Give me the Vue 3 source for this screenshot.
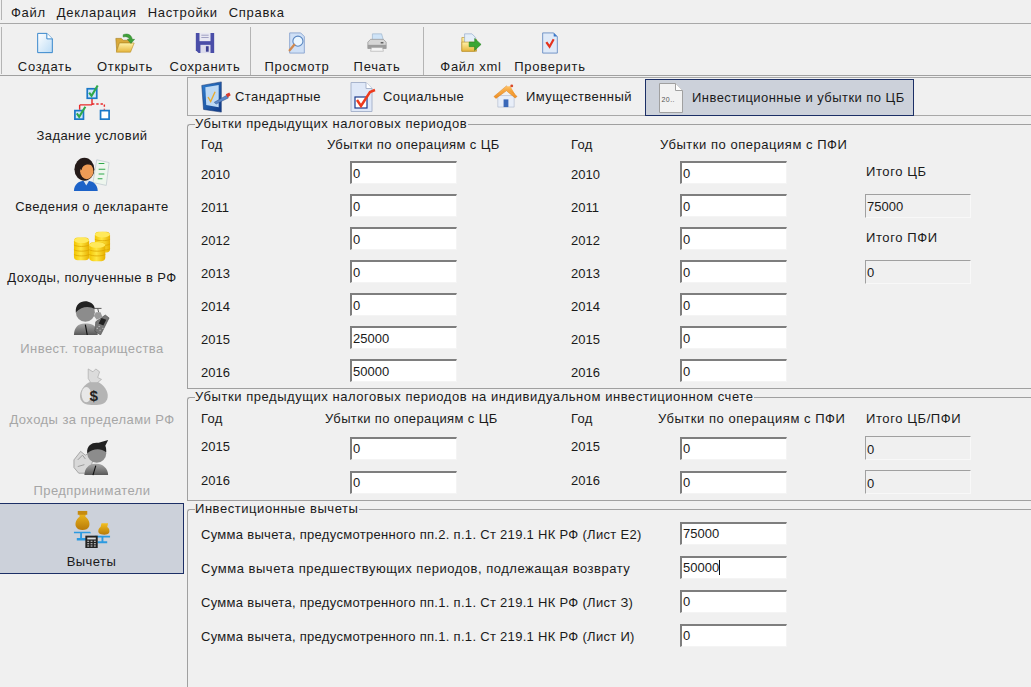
<script setup>
const menu = ['Файл', 'Декларация', 'Настройки', 'Справка']
const tools1 = [
  { t: 'Создать', i: 'new', w: 80 },
  { t: 'Открыть', i: 'open', w: 80 },
  { t: 'Сохранить', i: 'save', w: 80 }
]
const tools2 = [
  { t: 'Просмотр', i: 'preview', w: 92 },
  { t: 'Печать', i: 'print', w: 68 }
]
const tools3 = [
  { t: 'Файл xml', i: 'xml', w: 84 },
  { t: 'Проверить', i: 'check', w: 74 }
]
const nav = [
  { t: 'Задание условий', i: 'tree' },
  { t: 'Сведения о декларанте', i: 'person' },
  { t: 'Доходы, полученные в РФ', i: 'coins' },
  { t: 'Инвест. товарищества', i: 'invest', off: true },
  { t: 'Доходы за пределами РФ', i: 'bag', off: true },
  { t: 'Предприниматели', i: 'biz', off: true },
  { t: 'Вычеты', i: 'scale', on: true }
]
const rows1 = [
  ['2010', '0', '0'], ['2011', '0', '0'], ['2012', '0', '0'], ['2013', '0', '0'],
  ['2014', '0', '0'], ['2015', '25000', '0'], ['2016', '50000', '0']
]
const side = { 0: ['Итого ЦБ', false], 1: ['75000', true], 2: ['Итого ПФИ', false], 3: ['0', true] }
const rows2 = [['2015', '0', '0', '0'], ['2016', '0', '0', '0']]
const rows3 = [
  ['Сумма вычета, предусмотренного пп.2. п.1. Ст 219.1 НК РФ (Лист Е2)', '75000', false],
  ['Сумма вычета предшествующих периодов, подлежащая возврату', '50000', true],
  ['Сумма вычета, предусмотренного пп.1. п.1. Ст 219.1 НК РФ (Лист З)', '0', false],
  ['Сумма вычета, предусмотренного пп.1. п.1. Ст 219.1 НК РФ (Лист И)', '0', false]
]
</script>

<template>
  <div class="app">
    <svg class="defs" width="0" height="0" aria-hidden="true">
      <defs>
        <linearGradient id="gPage" x1="0" y1="0" x2="1" y2="1"><stop offset="0" stop-color="#ffffff"/><stop offset="1" stop-color="#bcdcf6"/></linearGradient>
        <linearGradient id="gFolder" x1="0" y1="0" x2="0" y2="1"><stop offset="0" stop-color="#fff2a8"/><stop offset="1" stop-color="#e6b53c"/></linearGradient>
        <linearGradient id="gGold" x1="0" y1="0" x2="1" y2="0"><stop offset="0" stop-color="#f2c400"/><stop offset=".45" stop-color="#ffe640"/><stop offset="1" stop-color="#e8b000"/></linearGradient>
        <linearGradient id="gGrey" x1="0" y1="0" x2="0" y2="1"><stop offset="0" stop-color="#a8a8a8"/><stop offset="1" stop-color="#585858"/></linearGradient>
        <linearGradient id="gBlue" x1="0" y1="0" x2="1" y2="1"><stop offset="0" stop-color="#2f7fd0"/><stop offset="1" stop-color="#123a86"/></linearGradient>
        <linearGradient id="gRoof" x1="0" y1="0" x2="0" y2="1"><stop offset="0" stop-color="#ffc468"/><stop offset="1" stop-color="#ee8c1e"/></linearGradient>
        <linearGradient id="gSack" x1="0" y1="0" x2="0" y2="1"><stop offset="0" stop-color="#f4c020"/><stop offset="1" stop-color="#b87a08"/></linearGradient>
      </defs>
    </svg>

    <nav class="menubar">
      <span v-for="m in menu" :key="m">{{ m }}</span>
    </nav>

    <div class="toolbar">
      <div class="tgroup g1">
        <button v-for="b in tools1" :key="b.t" class="tool" :style="{ width: b.w + 'px' }">
          <svg class="ticon" viewBox="0 0 24 24">
            <template v-if="b.i === 'new'">
              <path d="M4 1.500h10l6 6v15H4z" fill="url(#gPage)" stroke="#2a7fc8"/>
              <path d="M14 1.500v6h6" fill="#fff" stroke="#2a7fc8"/>
            </template>
            <template v-else-if="b.i === 'open'">
              <path d="M2 7h6l2 2h9v3H6L3 21z" fill="#d9a93a" stroke="#a8801e" stroke-width=".7"/>
              <path d="M6 12h16l-4 10H2.500z" fill="url(#gFolder)" stroke="#b8902c" stroke-width=".7"/>
              <path d="M10 3c5-2 9 0 10 5h2.500l-4 4.500-4-4.500h2.500c-1-2.500-3.500-3.500-7-2.500z" fill="#3fa03a" stroke="#2a7a28" stroke-width=".5"/>
            </template>
            <template v-else-if="b.i === 'save'">
              <path d="M2 1h20v22H5l-3-3z" fill="#4a4ea8"/>
              <rect x="6" y="1" width="12" height="9" fill="#e8e8f2"/>
              <path d="M8 3.500h8M8 6h8" stroke="#9a9ac0"/>
              <rect x="7" y="14" width="11" height="9" fill="#dcdcec"/>
              <rect x="13" y="15.500" width="3" height="6" fill="#3c3f92"/>
            </template>
          </svg>
          <span>{{ b.t }}</span>
        </button>
      </div>
      <div class="tgroup g2">
        <button v-for="b in tools2" :key="b.t" class="tool" :style="{ width: b.w + 'px' }">
          <svg class="ticon" viewBox="0 0 24 24">
            <template v-if="b.i === 'preview'">
              <path d="M4 1h12l4 4v18H4z" fill="#cfe0f6" stroke="#8aa4d0"/>
              <circle cx="13" cy="10" r="5.500" fill="#eaf6ff" stroke="#5a86c0" stroke-width="1.200"/>
              <path d="M9 14l-5 6" stroke="#d08a50" stroke-width="2.500" stroke-linecap="round"/>
            </template>
            <template v-else>
              <path d="M7 9V2h10l2 7z" fill="#cfe4f8" stroke="#9ab0c8" stroke-width=".7"/>
              <path d="M2 11l3-3h14l3 3v7H2z" fill="#d6d6d6" stroke="#8c8c8c" stroke-width=".7"/>
              <path d="M2 14h20v4H2z" fill="#9c9c9c"/>
              <path d="M6 17h12l1 4H5z" fill="#f6f6f6" stroke="#a0a0a0" stroke-width=".6"/>
              <rect x="16" y="11" width="3" height="1.500" fill="#5a5a5a"/>
            </template>
          </svg>
          <span>{{ b.t }}</span>
        </button>
      </div>
      <div class="tgroup g3">
        <button v-for="b in tools3" :key="b.t" class="tool" :style="{ width: b.w + 'px' }">
          <svg class="ticon" viewBox="0 0 24 24">
            <template v-if="b.i === 'xml'">
              <path d="M2 6h7l2 2h7v13H2z" fill="url(#gFolder)" stroke="#b8902c" stroke-width=".7"/>
              <path d="M5 2h8l4 4v8H5z" fill="#e4eef8" stroke="#8ea8cc" stroke-width=".7"/>
              <path d="M2 11h14v10H2z" fill="url(#gFolder)" stroke="#b8902c" stroke-width=".7"/>
              <path d="M10 11h6V7l7 6.500-7 6.500v-4h-6z" fill="#39a635" stroke="#25801f" stroke-width=".6"/>
            </template>
            <template v-else>
              <path d="M4 1h12l4 4v18H4z" fill="#dfeaf8" stroke="#6a8ec4"/>
              <path d="M16 1v4h4" fill="#3a78c8"/>
              <path d="M8 11l3.500 5L16 8" fill="none" stroke="#e5321c" stroke-width="2.400"/>
            </template>
          </svg>
          <span>{{ b.t }}</span>
        </button>
      </div>
    </div>

    <div class="body">
      <aside class="sidebar">
        <button v-for="n in nav" :key="n.t" class="navitem" :class="{ off: n.off, on: n.on }">
          <svg class="nicon" viewBox="0 0 40 40">
            <template v-if="n.i === 'tree'">
              <path d="M20 14v8M7 22h13M7 22v5" fill="none" stroke="#e82a2a" stroke-width="1.500"/>
              <path d="M20 21h13v6" fill="none" stroke="#e82a2a" stroke-width="1.500" stroke-dasharray="2.500 2"/>
              <rect x="15" y="5" width="10" height="10" fill="#cfe6fa" stroke="#1a78c8" stroke-width="1.800"/>
              <path d="M17 9l2.500 3.500L26 1.500" fill="none" stroke="#2fa84a" stroke-width="2.200"/>
              <rect x="2" y="28" width="9" height="9" fill="#cfe6fa" stroke="#1a78c8" stroke-width="1.800"/>
              <path d="M4 31l2.500 3.500L13 24" fill="none" stroke="#2fa84a" stroke-width="2.200"/>
              <rect x="29" y="28" width="9" height="9" fill="#fff" stroke="#1a78c8" stroke-width="1.800"/>
            </template>
            <template v-else-if="n.i === 'person'">
              <path d="M25 5l13 3-3 24-14-3z" fill="#eef6ee" stroke="#b8c4cc" stroke-width=".7"/>
              <path d="M27 9h6M27 15h7M27 20h6M26 25h5" stroke="#2fa84a" stroke-width="1.200"/>
              <path d="M1 38c0-7 5-11 11-11h3c6 0 11 4 11 11z" fill="#1c62c8"/>
              <path d="M11 27l3 5 3-5z" fill="#dfe6ee"/>
              <ellipse cx="12" cy="15" rx="10.500" ry="12" fill="#241a18"/>
              <ellipse cx="14.500" cy="17" rx="7" ry="8.500" fill="#ee9c56"/>
              <path d="M5 12c4-6 12-6 15-1-4-2-10-1-11 5z" fill="#241a18"/>
            </template>
            <template v-else-if="n.i === 'coins'">
              <g>
                <rect x="23" y="6" width="16" height="22" rx="4" fill="url(#gGold)"/>
                <ellipse cx="31" cy="9" rx="8" ry="3" fill="#ffe95a"/>
                <path d="M23 14c3 2 13 2 16 0M23 19c3 2 13 2 16 0M23 24c3 2 13 2 16 0" stroke="#dba400" stroke-width=".8" fill="none"/>
                <rect x="1" y="12" width="16" height="24" rx="4" fill="url(#gGold)"/>
                <ellipse cx="9" cy="15" rx="8" ry="3" fill="#ffe95a"/>
                <path d="M1 20c3 2 13 2 16 0M1 25c3 2 13 2 16 0M1 30c3 2 13 2 16 0" stroke="#dba400" stroke-width=".8" fill="none"/>
                <rect x="17" y="17" width="17" height="20" rx="4" fill="url(#gGold)"/>
                <ellipse cx="25.500" cy="20" rx="8.500" ry="3" fill="#ffe95a"/>
                <path d="M17 25c3 2 14 2 17 0M17 30c3 2 14 2 17 0" stroke="#dba400" stroke-width=".8" fill="none"/>
              </g>
            </template>
            <template v-else-if="n.i === 'invest'">
              <g transform="translate(0 2)">
                <path d="M1 38c0-8 5-12 11-12h3c6 0 11 4 11 12z" fill="url(#gGrey)"/>
                <path d="M13 27l2 11" stroke="#111" stroke-width="1.200"/>
                <circle cx="13" cy="14" r="10" fill="#8c8c8c"/>
                <path d="M3 14C2 5 10 1 16 3c4 1 7 4 7 8-6-4-14-3-20 3z" fill="#222"/>
                <path d="M24 24l10-7 4 3-9 18-6-4z" fill="#777" stroke="#444" stroke-width=".6"/>
                <path d="M30 20l5 2-3 6-5-2z" fill="#222"/>
                <path d="M25 31h1M28 33h1M31 31h1M27 29h1" stroke="#ddd"/>
                <path d="M24 14h5l2 5-6 3-3-4z" fill="#9a9a9a"/>
                <path d="M26 10l1 4M23 10h7" stroke="#555"/>
              </g>
            </template>
            <template v-else-if="n.i === 'bag'">
              <g transform="translate(2 0)">
                <path d="M14 1l5 3 3-3 4 3-2 6 4 2-5 4h-6l-3-5z" fill="#dcdcdc" stroke="#a8a8a8" stroke-width=".7"/>
                <path d="M15 15h10c8 5 11 12 9 18-2 5-7 6-14 6s-12-1-14-6c-2-6 1-13 9-18z" fill="#b4b4b4"/>
                <ellipse cx="12" cy="28" rx="5" ry="8" fill="#e8e8e8"/>
                <text x="20" y="35" text-anchor="middle" class="dollar">$</text>
              </g>
            </template>
            <template v-else-if="n.i === 'biz'">
              <path d="M1 22l7-9 5 4 5-3 3 8-4 14H6l-5-6z" fill="#d8d8d8" stroke="#888" stroke-width=".7"/>
              <path d="M5 22l5-5 3 4M5 29l7-2" stroke="#999" fill="none"/>
              <path d="M12 38c0-7 5-12 11-12h2c6 0 12 5 12 12z" fill="url(#gGrey)"/>
              <path d="M24 28l-3 10" stroke="#111" stroke-width="1.200"/>
              <circle cx="25" cy="15" r="10" fill="#8c8c8c"/>
              <path d="M15 15c-1-9 6-12 12-11l10-3-3 6c1 2 1 4 1 7-6-5-14-4-20 1z" fill="#222"/>
            </template>
            <template v-else>
              <path d="M6 1h8l-1 6c4 3 5 7 4 10-1 3-4 4-7 4s-6-1-7-4c-1-3 0-7 4-10z" fill="url(#gSack)"/>
              <path d="M5 1h10v4H5z" fill="#c58a10"/>
              <path d="M30 14h7l-1 4c2 1 3 4 2 6-1 1.500-3 2-5 2s-5-.500-6-2c-1-2 0-5 2-6z" fill="url(#gSack)"/>
              <path d="M1 23h17l1 1.500H9.500v5H14V32H4v-2.500h3.500v-5H1z" fill="#2c9ae0"/>
              <path d="M23 27h16v2h-7v4h4v2H26v-2h4v-4h-7z" fill="#2c9ae0"/>
              <rect x="13" y="27" width="13" height="13" fill="#222"/>
              <rect x="15" y="29" width="9" height="2" fill="#dcdcdc"/>
              <path d="M15 33h2M18.500 33h2M22 33h2M15 35.500h2M18.500 35.500h2M22 35.500h2M15 38h2M18.500 38h2M22 38h2" stroke="#dcdcdc" stroke-width="1.100"/>
            </template>
          </svg>
          <span>{{ n.t }}</span>
        </button>
      </aside>

      <main class="content">
        <div class="tabs">
          <button class="tab std">
            <svg class="ti-std" viewBox="0 0 36 36">
              <path d="M2 5L24 1v34L4 32z" fill="url(#gBlue)" stroke="#0f2f6e" stroke-width=".6"/>
              <path d="M6 7l15-2.500v25L7 27z" fill="#bcd8f4"/>
              <path d="M9 18l3 5 5-11" fill="none" stroke="#eaa92a" stroke-width="1.500"/>
              <path d="M16 24l14-8 2 3-14 7z" fill="#5a86c8" stroke="#28487c" stroke-width=".5"/>
              <path d="M29 15l4-2 1.500 3-3.500 2.500z" fill="#d83a2c"/>
            </svg>
            <span>Стандартные</span>
          </button>
          <button class="tab soc">
            <svg class="ti-soc" viewBox="0 0 26 30">
              <path d="M1 .500h15l6 6v23H1z" fill="#dfe8f8" stroke="#a8b4cc"/>
              <path d="M16 .500v6h6" fill="#fff" stroke="#a8b4cc"/>
              <rect x="5" y="15" width="12" height="11" fill="#fff" stroke="#1c3a8c" stroke-width="1.200"/>
              <path d="M7 18l4 6L20 10l5-2" fill="none" stroke="#ee3a1c" stroke-width="2.500"/>
            </svg>
            <span>Социальные</span>
          </button>
          <button class="tab imu">
            <svg class="ti-imu" viewBox="0 0 26 26">
              <path d="M5 12h17v12H5z" fill="#e8eef8" stroke="#9aa8c0" stroke-width=".5"/>
              <path d="M11 16h5v8h-5z" fill="#3a68b8"/>
              <path d="M1 13L14 2l11 11-2 1.500L14 7 3 15z" fill="url(#gRoof)" stroke="#d87a18" stroke-width=".5"/>
              <path d="M13 3l5-1 5 9-9-5-6 4z" fill="url(#gRoof)"/>
              <circle cx="19.500" cy="2" r="1.500" fill="#d84a2a"/>
            </svg>
            <span>Имущественный</span>
          </button>
          <button class="tab inv">
            <svg class="ti-inv" viewBox="0 0 24 30">
              <path d="M.5.500h16l7 7v22H.5z" fill="#f2f2f2" stroke="#a0a0a0"/>
              <path d="M16.500.500v7h7" fill="#fff" stroke="#a0a0a0"/>
              <text x="2.500" y="19" class="docnum">20..</text>
            </svg>
            <span>Инвестиционные и убытки по ЦБ</span>
          </button>
        </div>

        <fieldset class="group g-a">
          <legend>Убытки предыдущих налоговых периодов</legend>
          <div class="grid">
            <span class="head c1">Год</span>
            <span class="head c2">Убытки по операциям с ЦБ</span>
            <span class="head c4">Год</span>
            <span class="head c5 wide">Убытки по операциям с ПФИ</span>
            <template v-for="(r, i) in rows1" :key="r[0]">
              <span class="year c1">{{ r[0] }}</span>
              <input class="inp c3" :value="r[1]" readonly />
              <span class="year c4">{{ r[0] }}</span>
              <input class="inp c6" :value="r[2]" readonly />
              <input v-if="side[i] && side[i][1]" class="inp ro c7" :value="side[i][0]" readonly />
              <span v-else-if="side[i]" class="total c7">{{ side[i][0] }}</span>
            </template>
          </div>
        </fieldset>

        <fieldset class="group g-b">
          <legend>Убытки предыдущих налоговых периодов на индивидуальном инвестиционном счете</legend>
          <div class="grid grid-b">
            <span class="head c1">Год</span>
            <span class="head c2 nudge">Убытки по операциям с ЦБ</span>
            <span class="head c4">Год</span>
            <span class="head c5 nudge wide">Убытки по операциям с ПФИ</span>
            <span class="head total c7">Итого ЦБ/ПФИ</span>
            <template v-for="r in rows2" :key="r[0]">
              <span class="year c1">{{ r[0] }}</span>
              <input class="inp c3" :value="r[1]" readonly />
              <span class="year c4">{{ r[0] }}</span>
              <input class="inp c6" :value="r[2]" readonly />
              <input class="inp ro c7" :value="r[3]" readonly />
            </template>
          </div>
        </fieldset>

        <fieldset class="group g-c">
          <legend>Инвестиционные вычеты</legend>
          <div class="deductions">
            <template v-for="r in rows3" :key="r[0]">
              <span class="dlabel" :class="{ wide: r[2] }">{{ r[0] }}</span>
              <div class="inp fake">{{ r[1] }}<i v-if="r[2]" class="caret"></i></div>
            </template>
          </div>
        </fieldset>
      </main>
    </div>
  </div>
</template>

<style>
html, body { margin: 0; padding: 0; background: #f0f0f0; overflow: hidden; }
</style>

<style scoped>
.app {
  width: 1031px;
  height: 687px;
  overflow: hidden;
  background: #f0f0f0;
  color: #1a1a1a;
  font: 13px/14px "Liberation Sans", sans-serif;
  letter-spacing: .45px;
  display: flex;
  flex-direction: column;
}
.defs { position: absolute; }
button { font: inherit; letter-spacing: inherit; color: inherit; background: none; border: 0; padding: 0; }

.menubar {
  height: 24px;
  box-sizing: border-box;
  border-bottom: 1px solid #a8a8a8;
  display: flex;
  gap: 11px;
  padding: 6px 0 0 11px;
  letter-spacing: .7px;
  position: relative;
}
.menubar::before {
  content: "";
  position: absolute;
  left: 1px;
  top: 0;
  bottom: 3px;
  width: 1px;
  background: #b4b4b4;
}
.toolbar {
  height: 52px;
  box-sizing: border-box;
  border-bottom: 1px solid #a0a0a0;
  display: flex;
  padding: 3px 0 0 5px;
  position: relative;
  letter-spacing: .7px;
}
.toolbar::before {
  content: "";
  position: absolute;
  left: 1px;
  top: 3px;
  bottom: 1px;
  width: 1px;
  background: #b4b4b4;
}
.tgroup { display: flex; border-right: 1px solid #b4b4b4; }
.g1 { width: 245px; }
.g2 { width: 172px; }
.g3 { border-right: 0; padding-left: 5px; }
.tool {
  display: flex;
  flex-direction: column;
  align-items: center;
  height: 48px;
  padding-top: 5px;
  white-space: nowrap;
}
.tool span { margin-top: 6px; }
.ticon { width: 22px; height: 22px; flex: none; }

.body { flex: 1; display: flex; min-height: 0; }
.sidebar {
  width: 187px;
  flex: none;
  padding-top: 1px;
  display: flex;
  flex-direction: column;
}
.navitem {
  height: 71px;
  box-sizing: border-box;
  width: 184px;
  flex: none;
  display: flex;
  flex-direction: column;
  align-items: center;
  padding-top: 7px;
  white-space: nowrap;
}
.navitem span { margin-top: 7px; }
.nicon { width: 38px; height: 38px; flex: none; }
.navitem.off { color: #a6a6a6; }
.navitem.on {
  background: #ccd1da;
  border: 1px solid #1c2f66;
  border-left: 0;
  padding-top: 6px;
}
.content { flex: 1; min-width: 0; }

.tabs {
  height: 39px;
  box-sizing: border-box;
  margin-top: 1px;
  border: 1px solid #a8a8a8;
  border-right: 0;
  display: flex;
  padding-left: 12px;
}
.tab { display: flex; align-items: center; white-space: nowrap; height: 37px; flex: none; }
.std { width: 150px; }
.soc { width: 143px; }
.imu { width: 152px; }
.ti-std { width: 32px; height: 32px; margin-right: 3px; flex: none; }
.ti-soc { width: 26px; height: 30px; margin-right: 7px; flex: none; }
.ti-imu { width: 25px; height: 25px; margin-right: 8px; flex: none; }
.ti-inv { width: 24px; height: 30px; margin-right: 9px; flex: none; }
.inv {
  width: 269px;
  margin-top: 1px;
  box-sizing: border-box;
  background: #ccd1da;
  border: 1px solid #1c2f66;
  padding-left: 13px;
}
.docnum { font: 7px "Liberation Sans", sans-serif; fill: #555; }
.dollar { font: bold 16px "Liberation Sans", sans-serif; fill: #222; }

.group {
  margin: 0;
  min-width: 0;
  padding: 0;
  box-sizing: border-box;
  border: 1px solid #a0a0a0;
  border-right: 0;
  border-top-left-radius: 3px;
}
.group legend {
  padding: 0 1px 0 0;
  margin-left: 7px;
  line-height: 14px;
  white-space: nowrap;
  letter-spacing: .55px;
}
.g-a { margin-top: 1px; height: 272px; }
.g-b { margin-top: 1px; height: 111px; }
.g-c { margin-top: 1px; height: 190px; border-bottom: 0; }

.grid {
  display: grid;
  grid-template-columns: 126px 23px 221px 89px 20px 185px 106px;
  grid-template-rows: 25px;
  grid-auto-rows: 33px;
  margin: 0 0 0 13px;
  align-items: center;
  justify-items: start;
}
.grid-b { grid-template-rows: 27px; grid-auto-rows: 34px; }
.head { white-space: nowrap; letter-spacing: .37px; position: relative; top: 1px; }
.head.wide { letter-spacing: .53px; }
.c1 { grid-column: 1; }
.c2 { grid-column: 2 / span 2; }
.c3 { grid-column: 3; }
.c4 { grid-column: 4; }
.c5 { grid-column: 5 / span 2; }
.c6 { grid-column: 6; }
.c7 { grid-column: 7; }
.nudge { margin-left: -2px; }
.year { position: relative; top: 2px; letter-spacing: 0; }
.grid-b .year { top: -1px; }

.inp {
  width: 107px;
  height: 23px;
  box-sizing: border-box;
  margin: 0;
  padding: 0 0 0 1px;
  font: 13px/19px "Liberation Sans", sans-serif;
  letter-spacing: 0;
  color: #1a1a1a;
  background: #fff;
  border-style: solid;
  border-width: 2px 1px 1px 2px;
  border-color: #7e7e7e #f4f4f4 #f4f4f4 #7e7e7e;
  outline: 0;
}
.inp.ro {
  background: #f0f0f0;
  border-width: 1px;
  border-color: #a0a0a0 #f8f8f8 #f8f8f8 #a0a0a0;
  height: 24px;
  width: 106px;
  padding-top: 2px;
}
.total, .head.total { white-space: nowrap; letter-spacing: .6px; margin-left: 1px; }
span.total:not(.head) { position: relative; top: -1px; }

.deductions {
  display: grid;
  grid-template-columns: 479px 107px;
  grid-auto-rows: 23px;
  row-gap: 11px;
  margin: 6px 0 0 13px;
  align-items: center;
  justify-items: start;
}
.dlabel { white-space: nowrap; position: relative; top: 1px; letter-spacing: .3px; }
.dlabel.wide { letter-spacing: .52px; }
.fake { display: block; white-space: nowrap; }
.caret { display: inline-block; width: 1px; height: 15px; background: #111; vertical-align: -3px; }
</style>
